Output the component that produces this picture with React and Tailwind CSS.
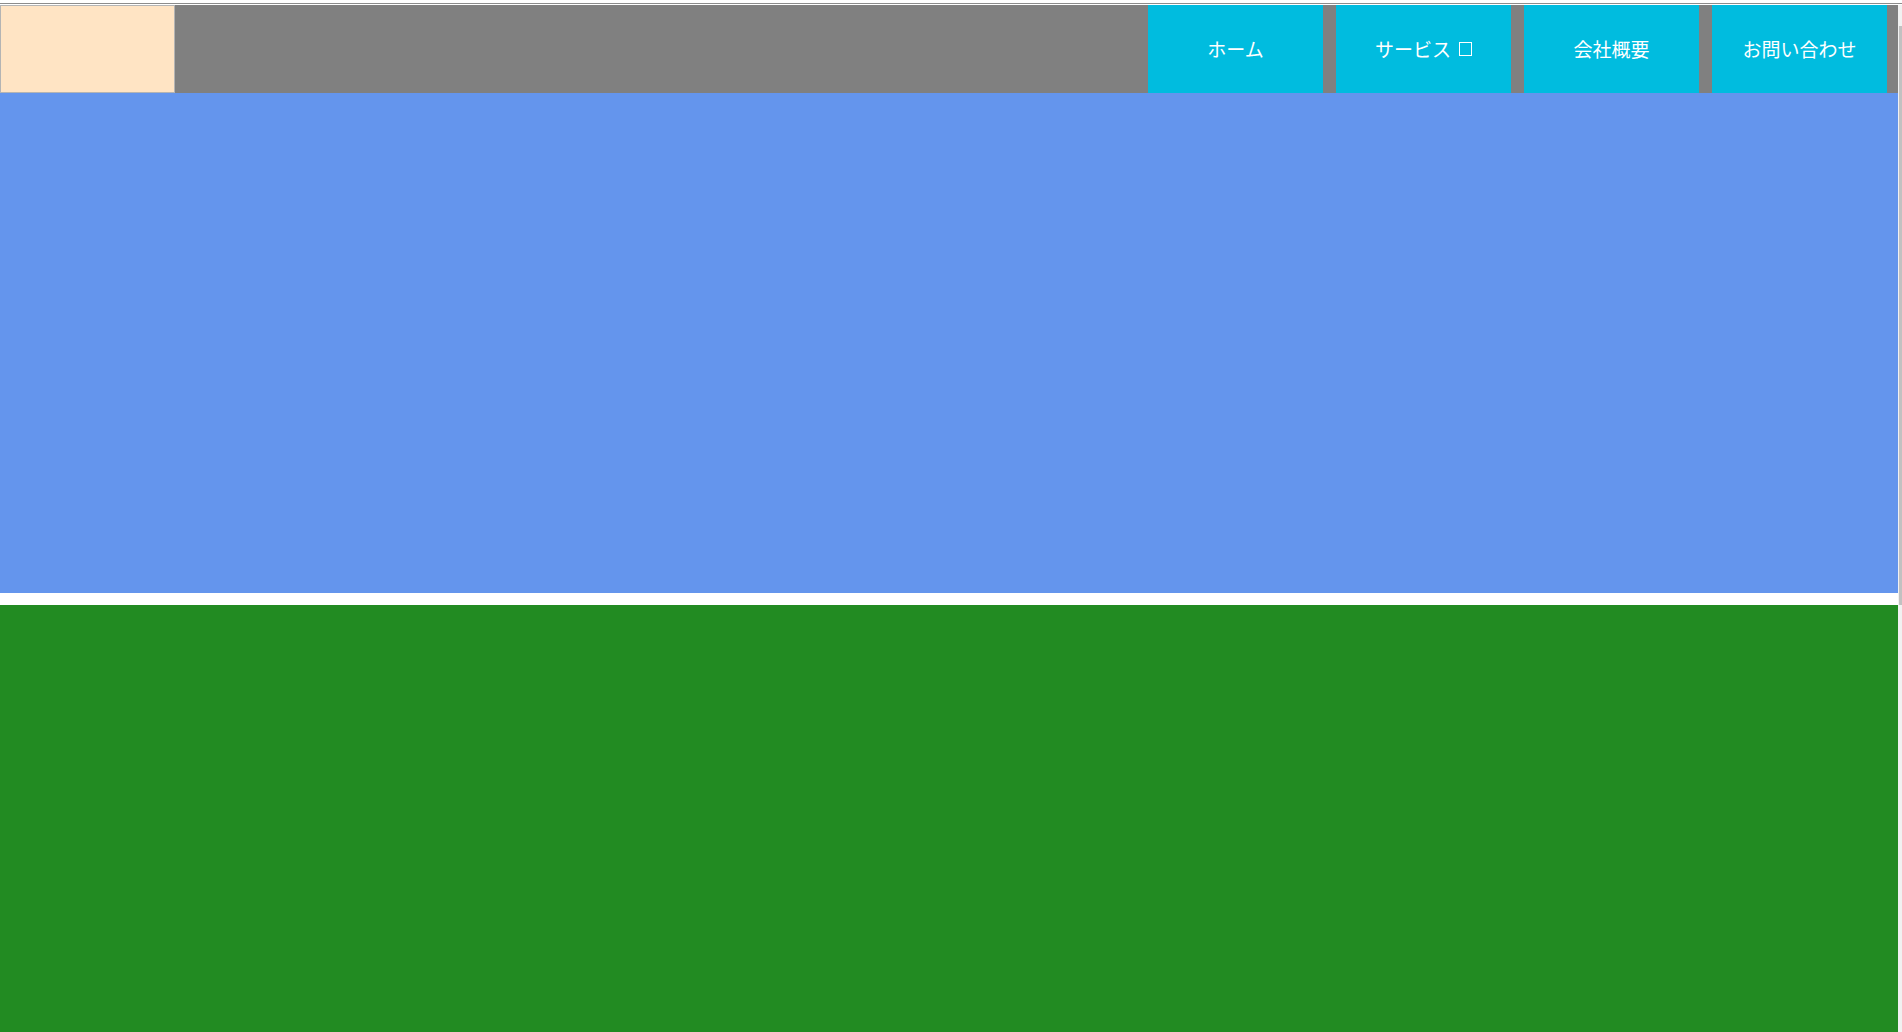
import React from "react";

const navItems = [
  { label: "ホーム" },
  { label: "サービス", tofu: true },
  { label: "会社概要" },
  { label: "お問い合わせ" },
];

function NavButton({ item }) {
  return (
    <a
      href="#"
      className="flex w-[175px] items-center justify-center bg-[#00bcdf] text-[19px] text-white"
    >
      {item.label}
      {item.tofu && (
        <span className="ml-[8px] inline-block h-[14px] w-[13px] border-[1.5px] border-white" />
      )}
    </a>
  );
}

export default function App() {
  return (
    <div
      className="flex min-h-screen flex-col bg-white pt-[3px]"
      style={{ fontFamily: '"Noto Sans CJK JP", "Noto Sans", sans-serif' }}
    >
      {/* top rule */}
      <div className="h-[1px] bg-[#8c8c8c]" />
      <div className="h-[1px]" />

      <div className="flex flex-1">
        <div className="flex-1">
          {/* Header */}
          <header className="flex h-[88px] bg-[#808080]">
            <div className="w-[175px] border border-[#b4b4b4] bg-[#ffe4c4]" />
            <nav className="ml-auto flex gap-[13px] pr-[11px]">
              {navItems.map((item) => (
                <NavButton key={item.label} item={item} />
              ))}
            </nav>
          </header>

          {/* Hero */}
          <section className="h-[500px] bg-[#6495ed]" />

          {/* Content */}
          <section className="mt-[12px] h-[520px] bg-[#228b22]" />
        </div>

        {/* scroll track */}
        <div className="w-[4px] bg-[#f1f1f1]">
          <div className="ml-[1px] mt-[21px] h-[579px] w-[3px] bg-[#c1c1c1]" />
        </div>
      </div>
    </div>
  );
}
